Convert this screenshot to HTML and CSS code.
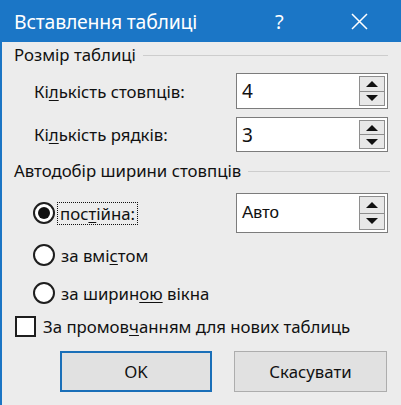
FILE: index.html
```html
<!DOCTYPE html>
<html lang="uk">
<head>
<meta charset="utf-8">
<title>Вставлення таблиці</title>
<link rel="stylesheet" href="styles.css">
</head>
<body>
<div class="dialog">
  <div class="titlebar">
    <span class="title">Вставлення таблиці</span>
    <span class="help">?</span>
    <svg class="close" width="17" height="17" viewBox="0 0 17 17"><path d="M1 1 L16 16 M16 1 L1 16" stroke="#fff" stroke-width="1.5" fill="none"/></svg>
  </div>
  <div class="content">
    <div class="group-head g1"><span>Розмір таблиці</span><i class="rule"></i></div>
    <div class="field-row r1">
      <span class="label">Кі<u>л</u>ькість стовпців:</span>
      <div class="spin h36"><span class="val">4</span><div class="arrows"><b class="up"></b><b class="down"></b></div></div>
    </div>
    <div class="field-row r2">
      <span class="label">Кі<u>л</u>ькість рядків:</span>
      <div class="spin h35"><span class="val">3</span><div class="arrows"><b class="up"></b><b class="down"></b></div></div>
    </div>
    <div class="group-head g2"><span>Автодобір ширини стовпців</span><i class="rule"></i></div>
    <div class="field-row r3 radios">
      <span class="opt"><i class="radio on"></i><span class="focus">пос<u>т</u>ійна:</span></span>
      <div class="spin h40"><span class="val auto">Авто</span><div class="arrows"><b class="up"></b><b class="down"></b></div></div>
    </div>
    <div class="opt-row r4"><span class="opt"><i class="radio"></i><span>за вмі<u>с</u>том</span></span></div>
    <div class="opt-row r5"><span class="opt"><i class="radio"></i><span>за ширин<u>ою</u> вікна</span></span></div>
    <div class="check-row"><i class="check"></i><span>За промов<u>ч</u>анням для нових таблиць</span></div>
    <div class="buttons">
      <button class="btn default">OK</button>
      <button class="btn">Скасувати</button>
    </div>
  </div>
</div>
</body>
</html>
```
FILE: styles.css
```css
* { box-sizing: border-box; }
html, body { margin: 0; padding: 0; }
body {
  width: 401px;
  height: 405px;
  overflow: hidden;
  background: #ececec;
  font-family: "Noto Sans", "Open Sans", sans-serif;
  color: #111;
}
.dialog {
  width: 401px;
  height: 405px;
  border-left: 2px solid #1b75c4;
  background: #ececec;
}
.titlebar {
  height: 42px;
  background: #1b76c6;
  color: #fff;
  display: flex;
  align-items: center;
  margin-left: -2px;
  padding-left: 14px;
}
.title { font-size: 19.4px; letter-spacing: -0.2px; }
.help { font-size: 20px; margin-left: 78px; }
.close { margin-left: 67px; }
.content {
  padding-left: 12px;
  padding-right: 13px;
  font-size: 16.8px;
}
u { text-decoration-thickness: 1px; text-underline-offset: 2px; }
.group-head {
  display: flex;
  align-items: center;
  height: 20px;
  line-height: 20px;
}
.group-head .rule {
  flex: 1;
  height: 1px;
  background: #cdcdcd;
  margin-left: 7px;
}
.g1 { margin-top: 3px; }
.g2 { margin-top: 9px; }
.g2 .rule { margin-right: -2px; }
.field-row {
  display: grid;
  grid-template-columns: 1fr 152px;
  align-items: center;
}
.r1 { margin-top: 8px; padding-left: 20px; }
.r2 { margin-top: 8px; padding-left: 20px; }
.r3 { margin-top: 12px; padding-left: 19px; }
.spin {
  background: #fff;
  border: 1px solid #7c7c7c;
  display: flex;
  align-items: center;
  justify-content: space-between;
  padding: 2px 2px 2px 5px;
}
.h36 { height: 36px; }
.h35 { height: 35px; }
.h40 { height: 40px; }
.val { font-size: 19px; }
.val.auto { font-family: "Liberation Sans", Arial, sans-serif; font-size: 17px; }
.arrows {
  display: flex;
  flex-direction: column;
  width: 26px;
  height: 100%;
}
.arrows b {
  flex: 1;
  border: 1px solid #8e8e8e;
  background: #e8e8e8;
  display: flex;
  align-items: center;
  justify-content: center;
}
.arrows b + b { border-top: 0; }
.arrows b::after {
  content: "";
  width: 0; height: 0;
  border-left: 6px solid transparent;
  border-right: 6px solid transparent;
}
.arrows .up::after { border-bottom: 6px solid #111; }
.arrows .down::after { border-top: 6px solid #111; }
.opt { display: flex; align-items: center; }
.radio {
  width: 22px; height: 22px;
  border: 2px solid #1e1e1e;
  border-radius: 50%;
  background: #fff;
  display: flex;
  align-items: center;
  justify-content: center;
  margin-right: 6px;
}
.radio.on::after {
  content: "";
  width: 12px; height: 12px;
  border-radius: 50%;
  background: #111;
}
.focus {
  outline: 1px dotted #111;
  outline-offset: 0;
  padding: 0 2px;
  line-height: 21px;
  margin-left: -3px;
}
.opt-row { height: 24px; display: flex; align-items: center; padding-left: 19px; }
.r4 { margin-top: 10px; }
.r5 { margin-top: 14px; }
.check-row {
  margin-top: 9px;
  height: 24px;
  display: flex;
  align-items: center;
}
.check {
  width: 21px; height: 21px;
  border: 2px solid #1e1e1e;
  background: #fff;
  margin-left: 1px;
  margin-right: 7px;
}
.buttons {
  margin-top: 13px;
  display: flex;
  gap: 22px;
  padding-left: 46px;
}
.btn {
  width: 152px;
  height: 41px;
  background: #e1e1e1;
  border: 1px solid #adadad;
  font-family: "Noto Sans", "Open Sans", sans-serif;
  font-size: 16.8px;
  color: #111;
  padding: 0;
}
.btn + .btn { width: 153px; }
.btn.default { border: 2px solid #1a6fb8; }
```
